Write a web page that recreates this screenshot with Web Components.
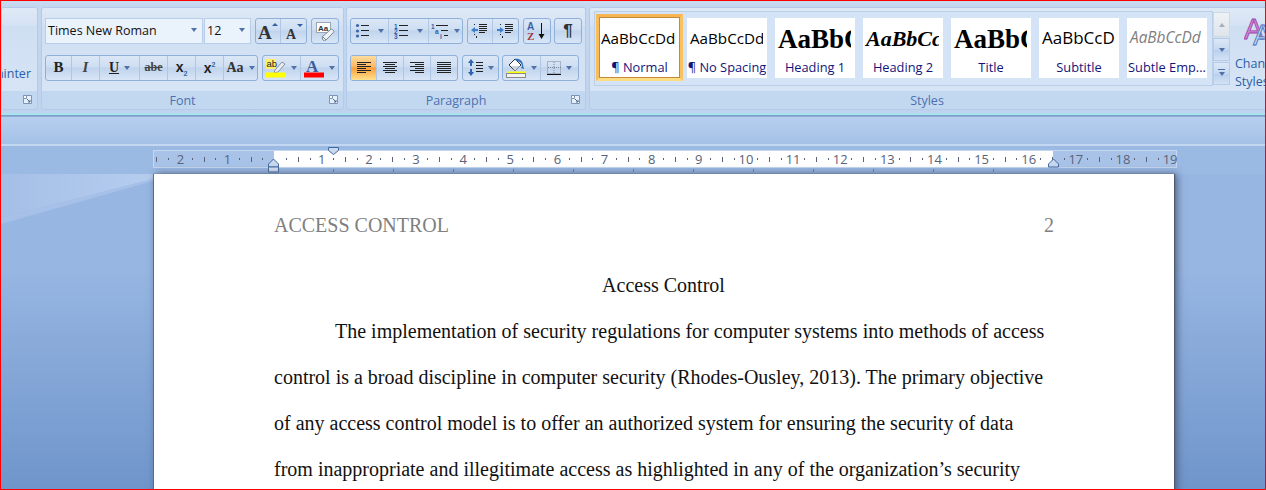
<!DOCTYPE html>
<html>
<head>
<meta charset="utf-8">
<title>Word</title>
<style>
  html, body { margin: 0; padding: 0; background: #97b6e0; }
</style>
</head>
<body>
<word-app>
  <word-ribbon slot="ribbon">
    <rb-group label="" style="width:37px" align="end" launcher>
      <rb-row style="height:37px"></rb-row>
      <div style="font:12.5px 'Open Sans',sans-serif;color:#2a5fa8;white-space:nowrap;line-height:16px;margin-top:0">Format Painter</div>
    </rb-group>
    <rb-group label="Font" style="width:303px;margin-left:3px" launcher>
      <rb-row>
        <rb-combo style="width:158px;margin-right:-3px">Times New Roman</rb-combo>
        <rb-combo style="width:47px">12</rb-combo>
        <rb-set>
          <rb-btn w="25"><rb-icon name="grow"></rb-icon></rb-btn>
          <rb-btn w="25"><rb-icon name="shrink"></rb-icon></rb-btn>
        </rb-set>
        <rb-set><rb-btn w="26"><rb-icon name="clear"></rb-icon></rb-btn></rb-set>
      </rb-row>
      <rb-row>
        <rb-set>
          <rb-btn w="26"><b style="font:bold 15px 'Liberation Serif',serif;color:#222">B</b></rb-btn>
          <rb-btn w="28"><i style="font:italic bold 15px 'Liberation Serif',serif;color:#444">I</i></rb-btn>
          <rb-btn w="40" arrow><u style="font:bold 14px 'Liberation Serif',serif;color:#222">U</u></rb-btn>
          <rb-btn w="28"><s style="font:bold 12px 'Liberation Serif',serif;color:#444">abe</s></rb-btn>
          <rb-btn w="28"><span style="font:bold 14px 'Liberation Sans',sans-serif;color:#222">x<sub style="font-size:7px;color:#3565a8">2</sub></span></rb-btn>
          <rb-btn w="28"><span style="font:bold 14px 'Liberation Sans',sans-serif;color:#222">x<sup style="font-size:7px;color:#3565a8">2</sup></span></rb-btn>
          <rb-btn w="33" arrow><span style="font:bold 14px 'Liberation Serif',serif;color:#333">Aa</span></rb-btn>
        </rb-set>
        <rb-set>
          <rb-btn w="38" arrow><rb-icon name="highlight"></rb-icon></rb-btn>
          <rb-btn w="37" arrow><rb-icon name="fontcolor"></rb-icon></rb-btn>
        </rb-set>
      </rb-row>
    </rb-group>
    <rb-group label="Paragraph" style="width:240px;margin-left:2px" launcher>
      <rb-row>
        <rb-set>
          <rb-btn w="38" arrow><rb-icon name="bullets"></rb-icon></rb-btn>
          <rb-btn w="40" arrow><rb-icon name="numbers"></rb-icon></rb-btn>
          <rb-btn w="33" arrow><rb-icon name="multi"></rb-icon></rb-btn>
        </rb-set>
        <rb-set>
          <rb-btn w="25"><rb-icon name="outdent"></rb-icon></rb-btn>
          <rb-btn w="25"><rb-icon name="indent"></rb-icon></rb-btn>
        </rb-set>
        <rb-set><rb-btn w="26"><rb-icon name="sort"></rb-icon></rb-btn></rb-set>
        <rb-set style="margin-left:-1px"><rb-btn w="26"><span style="font:bold 17px 'Liberation Sans',sans-serif;color:#333">¶</span></rb-btn></rb-set>
      </rb-row>
      <rb-row>
        <rb-set>
          <rb-btn w="26" active><rb-icon name="left"></rb-icon></rb-btn>
          <rb-btn w="27"><rb-icon name="center"></rb-icon></rb-btn>
          <rb-btn w="27"><rb-icon name="right"></rb-icon></rb-btn>
          <rb-btn w="26"><rb-icon name="justify"></rb-icon></rb-btn>
        </rb-set>
        <rb-set><rb-btn w="35" arrow><rb-icon name="spacing"></rb-icon></rb-btn></rb-set>
        <rb-set style="margin-left:-1px">
          <rb-btn w="38" arrow><rb-icon name="shade"></rb-icon></rb-btn>
          <rb-btn w="37" arrow><rb-icon name="borders"></rb-icon></rb-btn>
        </rb-set>
      </rb-row>
    </rb-group>
    <rb-group label="Styles" style="width:690px;margin-left:3px" flush>
      <style-gallery>
        <style-card selected label="¶ Normal" sample="AaBbCcDd" sstyle="font:15.2px 'Open Sans',sans-serif;line-height:40px"></style-card>
        <style-card label="¶ No Spacing" sample="AaBbCcDd" sstyle="font:15.2px 'Open Sans',sans-serif;line-height:40px"></style-card>
        <style-card label="Heading 1" sample="AaBbCc" sstyle="font:bold 27px 'Liberation Serif',serif;line-height:43px"></style-card>
        <style-card label="Heading 2" sample="AaBbCcDd" sstyle="font:italic bold 22px 'Liberation Serif',serif;line-height:42px"></style-card>
        <style-card label="Title" sample="AaBbCc" sstyle="font:bold 27px 'Liberation Serif',serif;line-height:43px"></style-card>
        <style-card label="Subtitle" sample="AaBbCcDd" sstyle="font:17px 'Open Sans',sans-serif;line-height:40px"></style-card>
        <style-card label="Subtle Emp..." sample="AaBbCcDd" sstyle="font:italic 15.4px 'Open Sans',sans-serif;color:#808080;line-height:40px"></style-card>
      </style-gallery>
    </rb-group>
  </word-ribbon>

  <doc-ruler slot="ruler"></doc-ruler>

  <doc-page slot="page">
    <div slot="head-left">ACCESS CONTROL</div>
    <div slot="head-right">2</div>
    <div slot="title">Access Control</div>
    <p-line indent>The implementation of security regulations for computer systems into methods of access</p-line>
    <p-line>control is a broad discipline in computer security (Rhodes-Ousley, 2013). The primary objective</p-line>
    <p-line>of any access control model is to offer an authorized system for ensuring the security of data</p-line>
    <p-line>from inappropriate and illegitimate access as highlighted in any of the organization’s security</p-line>
  </doc-page>
</word-app>

<script>
const html = String.raw;

// all the ribbon glyphs, 16px box unless the viewBox says otherwise
const line = (x1, y, x2, c = '#222') => `<rect x="${x1}" y="${y}" width="${x2 - x1}" height="1" fill="${c}"/>`;
const num = (x, y, t) => `<text x="${x}" y="${y}" font-family="Liberation Sans" font-weight="bold" font-size="6.5" fill="#2f5fa5">${t}</text>`;
const alignIcon = rows => `<svg width="16" height="14" viewBox="0 0 16 14">${rows.map((r, i) => line(r[0], 1 + i * 2, r[1])).join('')}</svg>`;

const icons = {
  grow: `<svg width="22" height="20" viewBox="0 0 22 20"><text x="1" y="18" font-family="Liberation Serif" font-weight="bold" font-size="19" fill="#333">A</text><path d="M15 5l3-3 3 3z" fill="#2f5fa5"/></svg>`,
  shrink: `<svg width="20" height="20" viewBox="0 0 20 20"><text x="2" y="18" font-family="Liberation Serif" font-weight="bold" font-size="14" fill="#333">A</text><path d="M13 3h6l-3 3z" fill="#2f5fa5"/></svg>`,
  clear: `<svg width="20" height="20" viewBox="0 0 20 20"><rect x="1.5" y="1.5" width="14" height="10" fill="#fff" stroke="#9aa5b5"/><text x="3" y="9.5" font-family="Liberation Sans" font-weight="bold" font-size="8" fill="#333">Aa</text><path d="M7 16l8-7c1-1 2-1 3 0s1 2 0 3l-7 7c-1 1-2 1-3 0z" fill="#eef2f7" stroke="#7d8794"/><path d="M7 15l4 4" stroke="#7d8794"/></svg>`,
  highlight: `<svg width="20" height="20" viewBox="0 0 20 20"><rect x="0" y="1" width="10" height="10" fill="#fbf06a"/><text x="0.5" y="9" font-family="Liberation Sans" font-size="9.5" fill="#222">ab</text><path d="M9 12l7-8 3 2-7 8-4 1z" fill="#e8edf3" stroke="#6d7a8c" stroke-width=".8"/><rect x="0" y="14.5" width="20" height="5" fill="#ff0"/></svg>`,
  fontcolor: `<svg width="20" height="20" viewBox="0 0 20 20"><text x="2" y="13.5" font-family="Liberation Serif" font-weight="bold" font-size="17" fill="#3b5c9c">A</text><rect x="0" y="14.5" width="20" height="5" fill="#f00"/></svg>`,
  bullets: `<svg width="18" height="16" viewBox="0 0 18 16"><g fill="#3b66a8"><circle cx="2.5" cy="2.5" r="1.6"/><circle cx="2.5" cy="8" r="1.6"/><circle cx="2.5" cy="13" r="1.6"/></g>${line(6, 2, 14)}${line(6, 7, 14)}${line(6, 12, 14)}</svg>`,
  numbers: `<svg width="18" height="16" viewBox="0 0 18 16">${num(0, 6, 1)}${num(0, 11, 2)}${num(0, 16, 3)}${line(5, 2, 14)}${line(5, 7, 14)}${line(5, 12, 14)}</svg>`,
  multi: `<svg width="18" height="16" viewBox="0 0 18 16">${num(0, 6, 1)}${num(4, 11, 'a')}${num(9, 16, 'i')}${line(5, 2, 17)}${line(10, 7, 17)}${line(13, 12, 17)}</svg>`,
  outdent: `<svg width="18" height="16" viewBox="0 0 18 16"><path d="M0 7l4-3v2h3v2H4v2z" fill="#3f7fd0"/>${line(3, 1, 4)}${line(8, 1, 16)}${line(8, 3, 16)}${line(8, 5, 16)}${line(8, 7, 16)}${line(8, 9, 14)}${line(3, 11, 4)}${line(5, 13, 6)}${line(5, 14, 6)}</svg>`,
  indent: `<svg width="18" height="16" viewBox="0 0 18 16"><path d="M7 7L3 4v2H0v2h3v2z" fill="#3f7fd0"/>${line(3, 1, 4)}${line(8, 1, 16)}${line(8, 3, 16)}${line(8, 5, 16)}${line(8, 7, 16)}${line(8, 9, 14)}${line(3, 11, 4)}${line(5, 13, 6)}${line(5, 14, 6)}</svg>`,
  sort: `<svg width="20" height="20" viewBox="0 0 20 20"><text x="0" y="9" font-family="Liberation Sans" font-weight="bold" font-size="10" fill="#3a62a8">A</text><text x="0" y="19" font-family="Liberation Serif" font-weight="bold" font-size="11" fill="#a33c3c">Z</text><path d="M14.5 2v14" stroke="#111"/><path d="M11.5 13h6l-3 5z" fill="#111"/></svg>`,
  left: alignIcon([[1, 15], [1, 10], [1, 15], [1, 10], [1, 15], [1, 10]]),
  center: alignIcon([[1, 15], [3, 13], [1, 15], [3, 13], [1, 15], [3, 13]]),
  right: alignIcon([[1, 15], [6, 15], [1, 15], [6, 15], [1, 15], [6, 15]]),
  justify: alignIcon([[1, 15], [1, 15], [1, 15], [1, 15], [1, 15], [1, 15]]),
  spacing: `<svg width="16" height="18" viewBox="0 0 16 18"><path d="M4 0l3 4H5v3H3V4H1zM4 17l3-4H5v-3H3v3H1z" fill="#2f63ad"/>${line(9, 3, 16)}${line(9, 6, 16)}${line(9, 9, 16)}${line(9, 12, 16)}</svg>`,
  shade: `<svg width="20" height="20" viewBox="0 0 20 20"><path d="M3 7l6-6 6 6-6 6z" fill="#fff" stroke="#333"/><path d="M5 8h9l-5 5z" fill="#c9d4e2"/><path d="M9 1c4-1 8 2 8 6l1 4-3-1 1-2c0-3-3-5-6-5z" fill="#2f6fc0"/><rect x="1" y="13.5" width="18" height="1.5" fill="#ff0"/><rect x=".5" y="15.5" width="19" height="4" fill="#f2f2f2" stroke="#8a8a8a"/></svg>`,
  borders: `<svg width="14" height="14" viewBox="0 0 14 14"><g stroke="#7a8696" stroke-dasharray="1 1" fill="none"><rect x=".5" y=".5" width="13" height="12"/><path d="M7 1v12M1 6.5h13"/></g><rect x="0" y="13" width="14" height="1" fill="#111"/></svg>`,
  launcher: `<svg width="9" height="9" viewBox="0 0 9 9"><path d="M.5.5h8v8h-8z" fill="#e7f0fa" stroke="#7d96b8"/><path d="M.5.5h3v3h-3z" fill="#fff" stroke="#7d96b8"/><path d="M4 4l3 3M7 5v2H5" stroke="#51698c" fill="none"/></svg>`,
  changestyles: `<svg width="40" height="32" viewBox="0 0 40 32"><text x="0" y="23" font-family="Liberation Sans" font-size="29" fill="#c98bcf" stroke="#a23fae" stroke-width=".8">A</text><text x="9" y="29" font-family="Liberation Sans" font-size="29" fill="#bcd6f4" stroke="#3f70b8" stroke-width=".8">A</text></svg>`
};

class RbIcon extends HTMLElement {
  constructor() {
    super();
    this.attachShadow({mode: 'open'});
    this.shadowRoot.innerHTML = `<style>:host{display:inline-flex;align-items:center;justify-content:center;line-height:0}</style>${icons[this.getAttribute('name')] || ''}`;
  }
}
customElements.define('rb-icon', RbIcon);

const appTemplate = document.createElement('template');
appTemplate.innerHTML = html`
  <style>
    :host { display: grid; grid-template-rows: 112px 4px 29px 28px 1fr; box-sizing: border-box; width: 1266px; height: 490px; overflow: hidden; border: 1px solid #f00; position: relative;
      background: linear-gradient(#97b6e2 0, #97b6e2 55%, #6f95cb 100%); }
    .sep { background: linear-gradient(#a9e3ee 0 2px, #7d9ecb 2px 3px, #8eadd6 3px); }
    .band { background: linear-gradient(#b6cfef, #a5c1e7); border-bottom: 2px solid #c4d7f1; box-sizing: border-box; }
    .ruler { display: flex; background: #9ab9e3; }
    .page { position: relative; min-height: 0; display: flex; padding-left: 152px; }
    svg.swoosh { position: absolute; left: 0; top: 0; }
    ::slotted([slot=page]) { position: relative; }
  </style>
  <slot name="ribbon"></slot>
  <div class="sep"></div>
  <div class="band"></div>
  <div class="ruler"><slot name="ruler"></slot></div>
  <div class="page">
    <svg class="swoosh" width="152" height="60" viewBox="0 0 152 60"><defs><linearGradient id="sw" x1="0" x2="1"><stop offset="0" stop-color="#a4bfe7"/><stop offset="1" stop-color="#b6cdee"/></linearGradient></defs><path d="M0 0H152V5L0 44z" fill="url(#sw)"/><path d="M0 44L152 5V7L0 50z" fill="#a6c0e8"/></svg>
    <slot name="page"></slot>
  </div>
`;
class WordApp extends HTMLElement {
  constructor() {
    super();
    this.attachShadow({mode: 'open'});
    this.shadowRoot.appendChild(appTemplate.content.cloneNode(true));
  }
}
customElements.define('word-app', WordApp);

const ribbonTemplate = document.createElement('template');
ribbonTemplate.innerHTML = html`
  <style>
    :host { display: flex; box-sizing: border-box; height: 112px; padding-top: 6px; overflow: hidden;
      background: linear-gradient(#cbdcf2 0, #c4d7f0 5px, #bfd3ee 100%); }
  </style>
  <slot></slot>
`;
customElements.define('word-ribbon', class extends HTMLElement {
  constructor() {
    super();
    this.attachShadow({mode: 'open'});
    this.shadowRoot.appendChild(ribbonTemplate.content.cloneNode(true));
  }
});

const groupTemplate = document.createElement('template');
groupTemplate.innerHTML = html`
  <style>
    :host { display: flex; flex-direction: column; flex: none; box-sizing: border-box; height: 103px; border: 1px solid #b3cbe8; border-radius: 3px; overflow: hidden; position: relative;
      background: #c1d8f0; }
    .body { box-sizing: border-box; height: 83px; flex: none; padding: 10px 3px 0; display: flex; flex-direction: column; gap: 11px;
      background: linear-gradient(#dfe9f6 0, #d6e3f4 20%, #cfdff2 22%, #d6e4f5 100%); }
    :host([align=end]) .body { align-items: flex-end; padding-right: 6px; }
    :host([flush]) .body { padding: 3px 0 0 4px; }
    .label { flex: 1; box-sizing: border-box; padding: 2px 20px 0 0; text-align: center; font: 12.5px/16px "Open Sans", sans-serif; color: #4f70b0; }
    :host([flush]) .label { padding-right: 14px; }
    .launch { position: absolute; right: 5px; bottom: 5px; line-height: 0; }
    :host(:not([launcher])) .launch { display: none; }
  </style>
  <div class="body"><slot></slot></div>
  <div class="label"></div>
  <div class="launch"><rb-icon name="launcher"></rb-icon></div>
`;
customElements.define('rb-group', class extends HTMLElement {
  constructor() {
    super();
    this.attachShadow({mode: 'open'});
    this.shadowRoot.appendChild(groupTemplate.content.cloneNode(true));
    this.shadowRoot.querySelector('.label').textContent = this.getAttribute('label');
  }
});

customElements.define('rb-row', class extends HTMLElement {
  constructor() {
    super();
    this.attachShadow({mode: 'open'});
    this.shadowRoot.innerHTML = `<style>:host{display:flex;gap:4px;height:26px;flex:none}</style><slot></slot>`;
  }
});

customElements.define('rb-set', class extends HTMLElement {
  constructor() {
    super();
    this.attachShadow({mode: 'open'});
    this.shadowRoot.innerHTML = `<style>
      :host{display:flex;flex:none;box-sizing:border-box;height:26px;border:1px solid #8fb0d9;border-radius:3px;overflow:hidden;
        background:linear-gradient(#dbe7f6 0,#cedef2 45%,#c0d4ec 50%,#d8e6f7 100%)}
      </style><slot></slot>`;
  }
});

customElements.define('rb-btn', class extends HTMLElement {
  constructor() {
    super();
    this.attachShadow({mode: 'open'});
    const w = this.getAttribute('w');
    this.shadowRoot.innerHTML = `<style>
      :host{display:flex;flex:none;align-items:center;justify-content:center;box-sizing:border-box;height:100%;border-right:1px solid #afc7e5;gap:5px;padding-bottom:1px}
      :host(:last-child){border-right:0}
      :host([active]){background:linear-gradient(#fddc9b 0,#fdb766 45%,#fb9f3c 50%,#ffe28c 100%)}
      .a{display:none;width:0;height:0;border:3.5px solid transparent;border-top:4px solid #4f72a8;border-bottom:0}
      :host([arrow]) .a{display:block}
      </style><slot></slot><span class="a"></span>`;
    this.style.width = w + 'px';
  }
});

customElements.define('rb-combo', class extends HTMLElement {
  constructor() {
    super();
    this.attachShadow({mode: 'open'});
    this.shadowRoot.innerHTML = `<style>
      :host{display:flex;flex:none;align-items:center;box-sizing:border-box;height:26px;padding:0 5px 2px 2px;background:#eaf2fc;border:1px solid #b8cde8;font:12.5px "Open Sans",sans-serif;color:#111}
      span{flex:1;white-space:nowrap}
      .a{flex:none;width:0;height:0;border:3.5px solid transparent;border-top:4px solid #4f72a8;border-bottom:0}
      </style><span><slot></slot></span><i class="a"></i>`;
  }
});

customElements.define('style-gallery', class extends HTMLElement {
  constructor() {
    super();
    this.attachShadow({mode: 'open'});
    this.shadowRoot.innerHTML = `<style>
      :host{display:flex;height:75px;flex:none}
      .g{flex:none;box-sizing:border-box;width:619px;height:75px;display:flex;align-items:flex-start;gap:8px;padding:6px 0 0 1px;border:1px solid #b9cfea;background:#d4e3f6}
      .s{flex:none;display:flex;flex-direction:column;width:17px;gap:1px;height:73px;margin-top:1px}
      .s div{flex:1;box-sizing:border-box;display:flex;align-items:center;justify-content:center;border:1px solid #b5cbe6;background:linear-gradient(#dce8f7,#c6d9f1 50%,#b9cfec 52%,#d3e2f5);}
      .s div:first-child{flex:1.1;background:linear-gradient(#eef1f5,#dfe5ec);border-color:#d0d8e2}
      .t{width:0;height:0;border:3.5px solid transparent;border-top:4px solid #4f72a8;border-bottom:0}
      .u{border-top:0;border-bottom:4px solid #a4afbd}
      .m{border-top:4px solid #4f72a8;position:relative}
      .m::before{content:"";position:absolute;left:-3.5px;top:-7px;width:7px;height:1px;background:#4f72a8}
      .c{flex:none;width:60px;padding-left:5px;font:12.5px/18px "Open Sans",sans-serif;color:#2a5fa8}
      .c rb-icon{display:flex;justify-content:flex-start;height:33px;margin:4px 0 7px 9px}
      </style><div class="g"><slot></slot></div>
      <div class="s"><div><i class="t u"></i></div><div><i class="t"></i></div><div><i class="t m"></i></div></div>
      <div class="c"><rb-icon name="changestyles"></rb-icon><span>Change<br>Styles</span></div>`;
  }
});

const cardTemplate = document.createElement('template');
cardTemplate.innerHTML = html`
  <style>
    :host { display: block; flex: none; width: 80px; height: 60px; box-sizing: border-box; background: #fff; overflow: hidden; }
    :host([selected]) { width: 87px; height: 67px; margin: -4px -4px 0 0; border: 3px solid; border-color: #f7b552 #f9c25f #fcdd84 #f8bd5a; box-shadow: 0 0 0 1px #c48a3a inset; padding-top: 1px; }
    .s { height: 41px; padding-left: 3px; white-space: nowrap; overflow: hidden; margin-right: 4px; }
    :host([selected]) .s { padding-left: 2px; margin-right: 0; }
    .l { font: 12.8px/16px "Open Sans", sans-serif; color: #14147a; text-align: center; white-space: nowrap; }
  </style>
  <div class="s"></div>
  <div class="l"></div>
`;
customElements.define('style-card', class extends HTMLElement {
  constructor() {
    super();
    this.attachShadow({mode: 'open'});
    this.shadowRoot.appendChild(cardTemplate.content.cloneNode(true));
    const s = this.shadowRoot.querySelector('.s');
    s.textContent = this.getAttribute('sample');
    s.style.cssText = this.getAttribute('sstyle');
    this.shadowRoot.querySelector('.l').textContent = this.getAttribute('label');
  }
});

// ruler: one cell per quarter centimetre, zero sits at the left margin
customElements.define('doc-ruler', class extends HTMLElement {
  constructor() {
    super();
    this.attachShadow({mode: 'open'});
    let cells = '';
    for (let i = -10; i <= 76; i++) {
      let mark = '';
      if (i === 0) mark = '';
      else if (i % 4 === 0) mark = `<span>${Math.abs(i / 4)}</span>`;
      else if (i % 2 === 0) mark = '<b class="h"></b>';
      else mark = '<b class="d"></b>';
      cells += `<div class="c">${mark}</div>`;
    }
    let tabs = '';
    for (let x = 333; x <= 993; x += 60) tabs += '<i></i>';
    this.shadowRoot.innerHTML = `<style>
      :host{display:block;position:relative;height:28px;width:100%}
      .bar{position:absolute;left:152px;top:4px;width:1024px;height:18px;box-sizing:border-box;border:1px solid #c6d8f0;
        background:linear-gradient(90deg,#a9c3e8 120px,#fff 120px,#fff 899px,#a9c3e8 899px)}
      .track{position:absolute;left:-3px;top:0;height:16px;display:flex}
      .c{flex:none;width:11.79px;height:16px;display:flex;align-items:center;justify-content:center}
      .c span{font:13px "Open Sans",sans-serif;color:#5a6378}
      .h{width:1px;height:5px;background:#5a6378}
      .d{width:1px;height:2px;background:#5a6378}
      .tabs{position:absolute;left:332px;top:23px;display:flex;gap:59px}
      .tabs i{width:1px;height:3px;background:#6d84a5}
      svg{position:absolute}
      </style>
      <div class="bar"><div class="track">${cells}</div></div>
      <div class="tabs">${tabs}</div>
      <svg style="left:327px;top:1px" width="12" height="9" viewBox="0 0 12 9"><path d="M.5.5h10v3l-5 4-5-4z" fill="#c7d8ef" stroke="#456a9f"/></svg>
      <svg style="left:267px;top:12px" width="12" height="15" viewBox="0 0 12 15"><path d="M.5 6l5-5 5 5v3H.5z" fill="#c7d8ef" stroke="#456a9f"/><path d="M.5 9h10v5H.5z" fill="#d9e5f5" stroke="#456a9f"/></svg>
      <svg style="left:1047px;top:12px" width="12" height="10" viewBox="0 0 12 10"><path d="M.5 6l5-5 5 5v3H.5z" fill="#c7d8ef" stroke="#456a9f"/></svg>`;
  }
});

const pageTemplate = document.createElement('template');
pageTemplate.innerHTML = html`
  <style>
    :host { display: block; box-sizing: border-box; width: 1021px; height: 340px; background: #fff; padding: 28px 120px 0 120px;
      border-left: 1px solid #5e6b80; box-shadow: 1px 0 1px #4d5a70, 3px 0 8px #4f5f7c; font: 20px/46px "Liberation Serif", serif; color: #111; overflow: hidden; }
    .head { display: flex; justify-content: space-between; color: #808080; margin-bottom: 14px; }
    .title { text-align: center; padding-right: 1px; }
  </style>
  <div class="head"><slot name="head-left"></slot><slot name="head-right"></slot></div>
  <div class="title"><slot name="title"></slot></div>
  <slot></slot>
`;
customElements.define('doc-page', class extends HTMLElement {
  constructor() {
    super();
    this.attachShadow({mode: 'open'});
    this.shadowRoot.appendChild(pageTemplate.content.cloneNode(true));
  }
});

customElements.define('p-line', class extends HTMLElement {
  constructor() {
    super();
    this.attachShadow({mode: 'open'});
    this.shadowRoot.innerHTML = `<style>:host{display:block;white-space:nowrap}:host([indent]){padding-left:61px}</style><slot></slot>`;
  }
});
</script>
</body>
</html>
